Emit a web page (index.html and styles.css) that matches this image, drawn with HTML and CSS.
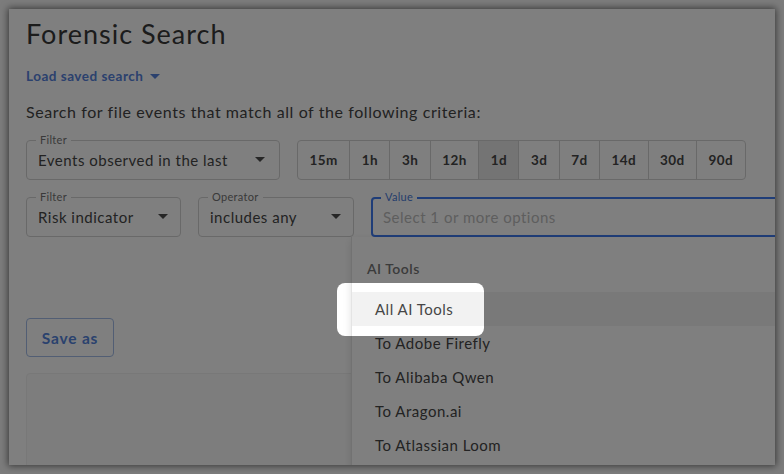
FILE: index.html
```html
<!DOCTYPE html>
<html>
<head>
<meta charset="utf-8">
<link rel="stylesheet" href="styles.css">
</head>
<body>
<div class="window">
  <div class="page">
    <h1 class="title">Forensic Search</h1>
    <div class="link">Load saved search <span class="caret caret-blue"></span></div>
    <p class="lead">Search for file events that match all of the following criteria:</p>
    <div class="row row1">
      <div class="field field-events">
        <span class="flabel">Filter</span>
        <span class="fvalue">Events observed in the last</span>
        <span class="caret"></span>
      </div>
      <div class="chips">
        <span class="chip">15m</span>
        <span class="chip">1h</span>
        <span class="chip">3h</span>
        <span class="chip">12h</span>
        <span class="chip active">1d</span>
        <span class="chip">3d</span>
        <span class="chip">7d</span>
        <span class="chip">14d</span>
        <span class="chip">30d</span>
        <span class="chip">90d</span>
      </div>
    </div>
    <div class="row row2">
      <div class="field field-risk">
        <span class="flabel">Filter</span>
        <span class="fvalue">Risk indicator</span>
        <span class="caret"></span>
      </div>
      <div class="field field-op">
        <span class="flabel">Operator</span>
        <span class="fvalue">includes any</span>
        <span class="caret"></span>
      </div>
      <div class="field field-value">
        <span class="flabel flabel-blue">Value</span>
        <span class="fplaceholder">Select 1 or more options</span>
      </div>
    </div>
    <div class="bottom">
      <button class="save">Save as</button>
      <div class="card"></div>
    </div>
  </div>
  <div class="menu">
    <div class="menu-head">AI Tools</div>
    <div class="menu-item hover">All AI Tools</div>
    <div class="menu-item">To Adobe Firefly</div>
    <div class="menu-item">To Alibaba Qwen</div>
    <div class="menu-item">To Aragon.ai</div>
    <div class="menu-item">To Atlassian Loom</div>
  </div>
  <div class="spotlight"></div>
</div>
</body>
</html>
```

FILE: styles.css
```css
html, body {
  margin: 0;
  padding: 0;
}
body {
  background: #7c7c7c;
  width: 784px;
  height: 474px;
  overflow: hidden;
  font-family: Lato, "Liberation Sans", sans-serif;
}
.window {
  position: relative;
  margin: 9px 0 0 9px;
  width: 766px;
  height: 456px;
  background: #ffffff;
  overflow: hidden;
  box-shadow: 0 0 7px 1px rgba(0, 0, 0, 0.55);
}
.page {
  padding: 10px 0 0 17px;
}
.title {
  margin: 0;
  font-size: 27px;
  font-weight: 400;
  line-height: 30px;
  color: #383838;
  letter-spacing: 1px;
}
.link {
  margin-top: 19px;
  font-size: 13.5px;
  font-weight: 700;
  line-height: 16px;
  letter-spacing: 0.5px;
  color: #5682dc;
  display: flex;
  align-items: center;
  gap: 7px;
}
.caret {
  width: 0;
  height: 0;
  border-left: 5px solid transparent;
  border-right: 5px solid transparent;
  border-top: 5px solid #4c4c4c;
}
.caret-blue {
  border-top-color: #5682dc;
}
.lead {
  margin: 19px 0 0 0;
  font-size: 16px;
  line-height: 18px;
  letter-spacing: 0.58px;
  color: #444444;
}
.row {
  display: flex;
  align-items: flex-start;
}
.row1 {
  margin-top: 19px;
  gap: 17px;
}
.row2 {
  margin-top: 17px;
  gap: 17px;
}
.field {
  position: relative;
  box-sizing: border-box;
  height: 40px;
  border: 1px solid #d2d2d2;
  border-radius: 4px;
  display: flex;
  align-items: center;
  padding: 0 12px 1px 11px;
  flex-shrink: 0;
}
.field-events { width: 254px; padding-right: 14px; }
.field-risk { width: 155px; }
.field-op { width: 156px; }
.field-value {
  width: 520px;
  height: 40px;
  border: 2px solid #3e7af0;
  padding-left: 10px;
}
.flabel {
  position: absolute;
  top: -8px;
  left: 9px;
  padding: 0 4px;
  background: #ffffff;
  font-size: 11px;
  line-height: 14px;
  letter-spacing: 0.3px;
  color: #747474;
}
.flabel-blue {
  color: #4a7ad8;
  top: -9px;
  left: 8px;
}
.fvalue {
  flex: 1;
  font-size: 15px;
  letter-spacing: 0.5px;
  color: #464646;
  white-space: nowrap;
}
.fplaceholder {
  font-size: 15px;
  letter-spacing: 0.5px;
  color: #bcbcbc;
  white-space: nowrap;
}
.chips {
  display: flex;
  height: 40px;
  box-sizing: border-box;
  border: 1px solid #d2d2d2;
  border-radius: 4px;
  overflow: hidden;
}
.chip {
  display: flex;
  align-items: center;
  justify-content: center;
  padding: 0 11.5px 1px;
  font-size: 13.5px;
  font-weight: 700;
  letter-spacing: 0.4px;
  color: #464646;
  border-left: 1px solid #d2d2d2;
}
.chip:first-child { border-left: none; }
.chip.active { background: #e8e8e8; }
.bottom {
  margin-top: 81px;
  display: flex;
  flex-direction: column;
  align-items: flex-start;
  gap: 16px;
}
.save {
  box-sizing: border-box;
  width: 88px;
  height: 39px;
  border: 1px solid #a4bde8;
  border-radius: 4px;
  background: #ffffff;
  font-family: inherit;
  font-size: 15.5px;
  font-weight: 700;
  letter-spacing: 0.8px;
  color: #5484dc;
  padding: 0;
}
.card {
  width: 400px;
  height: 120px;
  border: 1px solid #f0f0f0;
  border-radius: 4px;
  background: #fbfbfb;
}
.menu {
  position: absolute;
  left: 342px;
  top: 228px;
  width: 500px;
  height: 300px;
  background: #ffffff;
  border-left: 1px solid #e4e4e4;
  box-shadow: 0 3px 8px rgba(0, 0, 0, 0.12);
  padding-top: 21px;
}
.menu-head {
  padding-left: 15px;
  font-size: 14px;
  font-weight: 600;
  line-height: 22px;
  letter-spacing: 0.5px;
  color: #767676;
  margin-bottom: 12px;
}
.menu-item {
  height: 34px;
  display: flex;
  align-items: center;
  padding-left: 23px;
  font-size: 15px;
  letter-spacing: 0.5px;
  color: #464646;
}
.menu-item.hover { background: #f2f2f2; }
.spotlight {
  position: absolute;
  left: 328px;
  top: 274px;
  width: 147px;
  height: 53px;
  border-radius: 8px;
  box-shadow: 0 0 0 1200px rgba(0, 0, 0, 0.5);
  pointer-events: none;
}
```
